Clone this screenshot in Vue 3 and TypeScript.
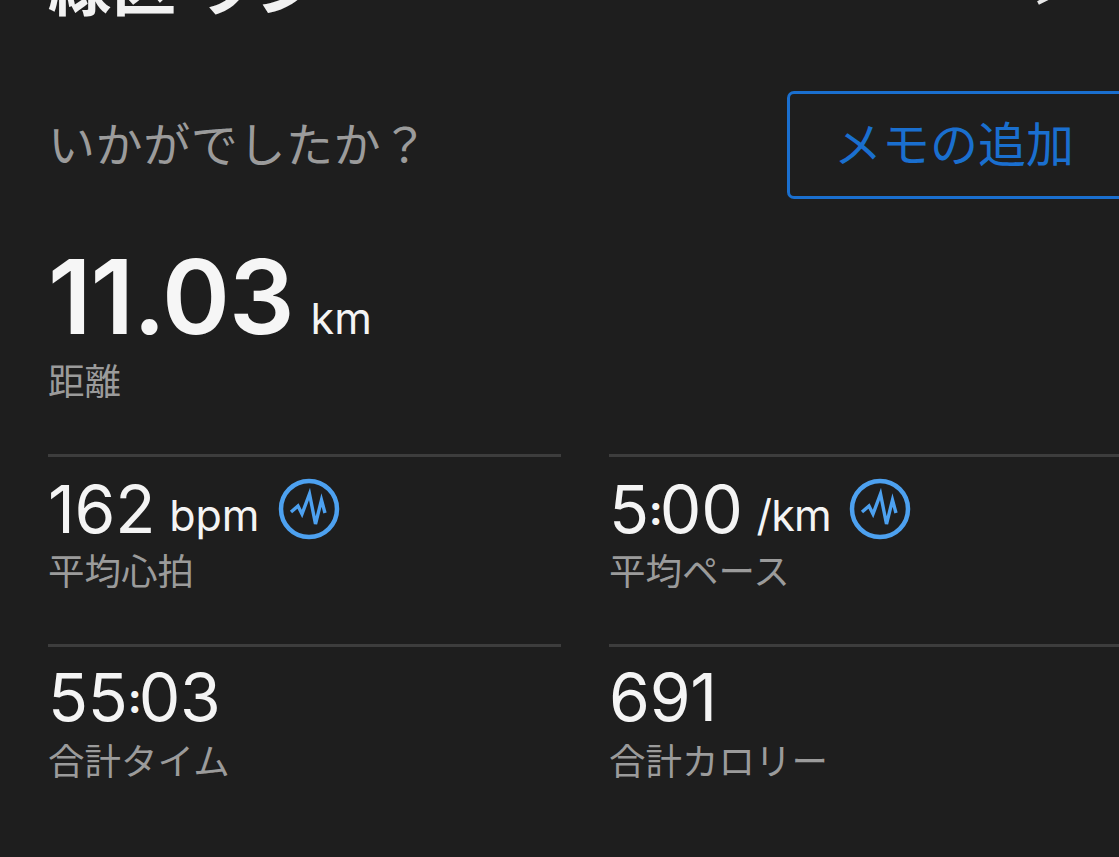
<template>
  <main class="screen">
    <header class="title-row">
      <h1 class="title">緑区 ラン</h1>
      <svg class="chevron" width="24" height="24" viewBox="0 0 24 24" aria-hidden="true">
        <path d="M2 -14 L14 -3 L2 3" fill="none" stroke="#e8e8e8" stroke-width="4" />
      </svg>
    </header>

    <section class="note-row">
      <p class="prompt">いかがでしたか？</p>
      <button class="note-btn">メモの追加</button>
    </section>

    <section class="distance">
      <div class="distance-value">
        <span class="big">11.03</span>
        <span class="big-unit">km</span>
      </div>
      <div class="label">距離</div>
    </section>

    <section class="stats">
      <div v-for="stat in stats" :key="stat.label" class="stat">
        <div class="stat-value" :class="{ plain: !stat.chart }">
          <span class="num">
            <template v-for="(part, i) in stat.value.split(':')" :key="i">
              <span v-if="i > 0" class="colon">:</span>{{ part }}
            </template>
          </span>
          <span v-if="stat.unit" class="unit" :class="{ pace: stat.unit.startsWith('/') }">{{ stat.unit }}</span>
          <svg v-if="stat.chart" class="chart-icon" width="62" height="62" viewBox="0 0 62 62" aria-hidden="true">
            <circle cx="31" cy="31" r="28" fill="none" stroke="#4da1f0" stroke-width="4.5" />
            <path
              d="M13 34 L20 28 L24 36 L31.5 16 L37.5 46 L43.5 22 L47 35"
              fill="none"
              stroke="#4da1f0"
              stroke-width="3.4"
              stroke-linejoin="miter"
            />
          </svg>
        </div>
        <div class="label">{{ stat.label }}</div>
      </div>
    </section>
  </main>
</template>

<script setup lang="ts">
interface Stat {
  value: string;
  unit?: string;
  label: string;
  chart?: boolean;
}

const stats: Stat[] = [
  { value: '162', unit: 'bpm', label: '平均心拍', chart: true },
  { value: '5:00', unit: '/km', label: '平均ペース', chart: true },
  { value: '55:03', label: '合計タイム' },
  { value: '691', label: '合計カロリー' },
];
</script>

<style scoped>
.screen {
  width: 1119px;
  height: 857px;
  overflow: hidden;
  box-sizing: border-box;
  padding-left: 48px;
  background: #1e1e1e;
  color: #f4f4f4;
  font-family: Inter, "Noto Sans CJK JP", sans-serif;
}

.title-row {
  display: flow-root;
  height: 10px;
  position: relative;
}

.title {
  margin: -46px 0 0;
  font-size: 64px;
  line-height: 66px;
  font-weight: 700;
  color: #f2f2f2;
  white-space: pre;
}

.chevron {
  position: absolute;
  top: 0;
  left: 988px;
  overflow: hidden;
}

.note-row {
  display: flex;
  align-items: center;
  justify-content: space-between;
  margin-top: 81px;
  margin-right: -12px;
}

.prompt {
  margin: 0;
  font-size: 47px;
  line-height: 56px;
  color: #9b9b9b;
  letter-spacing: 0.6px;
}

.note-btn {
  box-sizing: border-box;
  width: 344px;
  height: 108px;
  border: 3px solid #1a6fcf;
  border-radius: 7px;
  padding: 0 0 8px 44px;
  text-align: left;
  background: transparent;
  color: #1a6fcf;
  font-family: inherit;
  font-size: 48px;
}

.distance {
  margin-top: 48px;
}

.distance-value {
  display: flex;
  align-items: baseline;
  gap: 17px;
  height: 100px;
  padding-bottom: 13px;
  line-height: 100px;
}

.big {
  font-size: 103px;
  font-weight: 600;
  letter-spacing: -1px;
  color: #f6f6f6;
}

.big-unit {
  font-size: 43px;
}

.label {
  font-size: 36.5px;
  line-height: 44px;
  color: #9b9b9b;
}

.stats {
  display: grid;
  grid-template-columns: 513px 530px;
  column-gap: 48px;
  margin-top: 50px;
}

.stat {
  height: 190px;
  box-sizing: border-box;
  border-top: 3px solid #3d3d3d;
  padding-top: 16px;
}

.stat-value {
  display: flex;
  align-items: center;
  height: 72px;
  margin-bottom: 5px;
  line-height: 72px;
}

.stat-value.plain {
  height: 68px;
  margin-bottom: 9px;
}

.num {
  font-size: 66px;
  letter-spacing: -0.3px;
}

.colon {
  font-size: 42px;
  font-weight: 700;
  letter-spacing: -3px;
  line-height: 1;
  position: relative;
  top: -8px;
}

.unit {
  margin-left: 14px;
  font-size: 43px;
  margin-top: 12px;
}

.unit.pace {
  letter-spacing: -0.8px;
}

.chart-icon {
  margin-left: 19px;
}

.unit.pace + .chart-icon {
  margin-left: 18px;
}
</style>

<style>
html,
body {
  margin: 0;
  background: #1e1e1e;
}
</style>
